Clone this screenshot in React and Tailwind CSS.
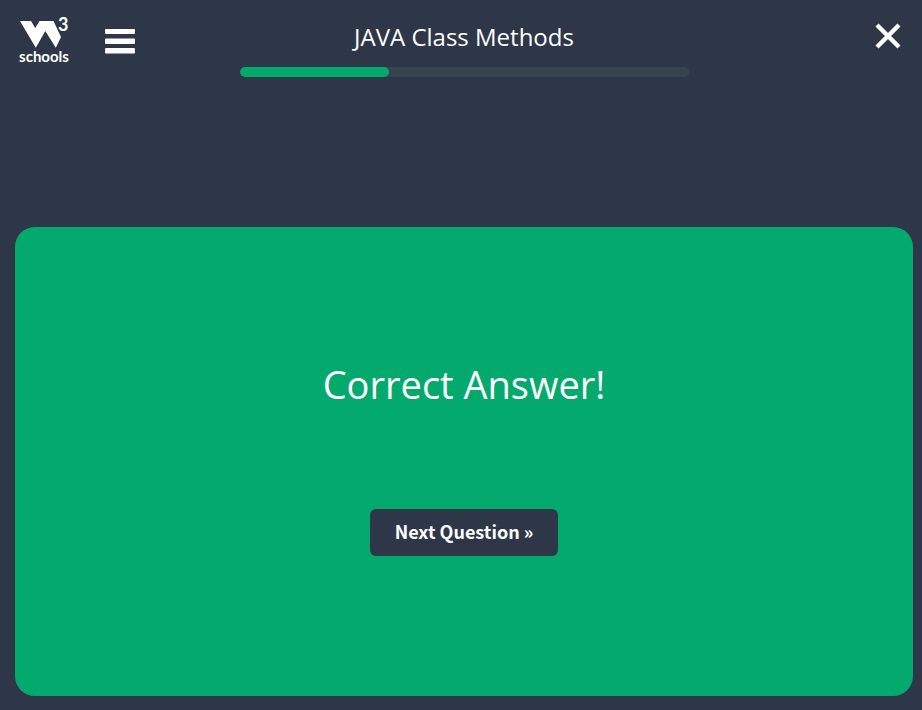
import React from "react";

function Logo() {
  return (
    <a href="#home" aria-label="W3Schools home" className="flex w-[50px] flex-col items-center text-white">
      <span className="flex h-8 w-full items-start">
        <svg viewBox="0 0 42 32" className="h-8 w-[42px] shrink-0" fill="currentColor" aria-hidden="true">
          <path d="M1 5H12L16.2 12L20.5 5H34.5L42 21L36.8 31.8L26.3 15L16.8 31.8Z" />
        </svg>
        <span className="-ml-[3px] font-['Lato'] text-lg/4 font-bold">3</span>
      </span>
      <span className="font-['Lato'] text-[15px]/4 font-bold">schools</span>
    </a>
  );
}

function MenuIcon() {
  return (
    <svg viewBox="0 0 30 25" className="h-[25px] w-[30px]" fill="currentColor" aria-hidden="true">
      <rect y="0" width="30" height="5" rx="1" />
      <rect y="9.5" width="30" height="5.5" rx="1" />
      <rect y="19" width="30" height="5.5" rx="1" />
    </svg>
  );
}

function CloseIcon() {
  return (
    <svg viewBox="0 0 26 26" className="size-[26px]" fill="none" stroke="currentColor" strokeWidth="4.4" aria-hidden="true">
      <path d="M2 2L24 24M24 2L2 24" />
    </svg>
  );
}

export default function App() {
  return (
    <main className="flex min-h-screen flex-col bg-[#2e3748] pr-[9px] pb-3.5 pl-[15px] font-['Open_Sans',sans-serif] text-white">
      <header className="grid grid-cols-[1fr_2fr_1fr] items-start">
        <div className="flex items-start pt-4 pl-1">
          <Logo />
          <button type="button" aria-label="Menu" className="mt-[13px] ml-9">
            <MenuIcon />
          </button>
        </div>
        <div className="flex flex-col pt-[19px]">
          <h1 className="text-center text-2xl/9">JAVA Class Methods</h1>
          <div
            role="progressbar"
            aria-label="Quiz progress"
            aria-valuenow={33}
            aria-valuemin={0}
            aria-valuemax={100}
            className="mt-3 h-2.5 overflow-hidden rounded-full bg-[#38444d]"
          >
            <div className="h-full w-1/3 rounded-full bg-[#04aa6d]" />
          </div>
        </div>
        <button type="button" aria-label="Close" className="mt-[23px] mr-3 justify-self-end">
          <CloseIcon />
        </button>
      </header>

      <section className="mt-[150px] flex grow flex-col items-center rounded-[20px] bg-[#04aa6d] pt-32 pb-35">
        <h2 className="text-[38px]/[58px]">Correct Answer!</h2>
        <button
          type="button"
          className="mt-24 h-[47px] rounded-md bg-[#2e3748] px-[25px] pb-1 font-['Noto_Sans_CJK_SC',sans-serif] text-lg font-bold"
        >
          Next Question »
        </button>
      </section>
    </main>
  );
}
